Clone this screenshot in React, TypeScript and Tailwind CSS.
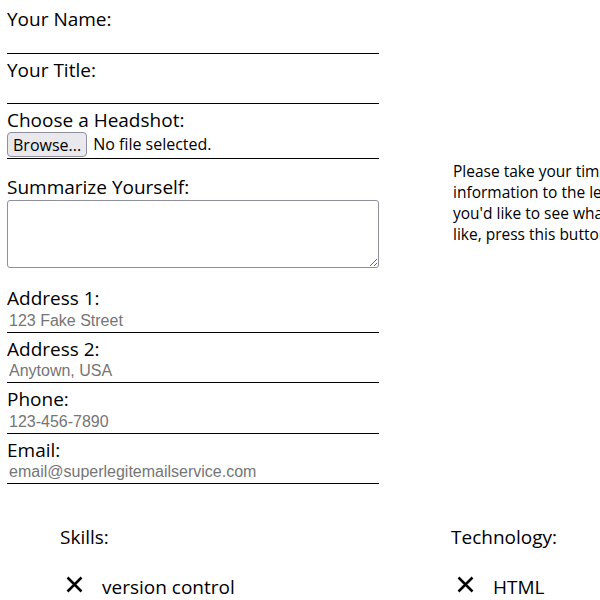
import React from "react";

const labelCls = "block pt-[4px] text-[19px] leading-[24px] text-black";
const inputCls =
  "block w-[372px] h-[22.5px] border-b border-black px-[2px] text-[16px] outline-none placeholder:text-[#757575] font-['Liberation_Sans',Arial,sans-serif]";

function Field({ label, placeholder, first }: { label: string; placeholder?: string; first?: boolean }) {
  return (
    <div className={first ? "pt-[3px]" : ""}>
      <label className={labelCls}>{label}</label>
      <input type="text" placeholder={placeholder} className={inputCls} />
    </div>
  );
}

function XIcon() {
  return (
    <svg width="17" height="17" viewBox="0 0 17 17" className="block shrink-0">
      <path d="M1.5 1.5 L15.5 15.5 M15.5 1.5 L1.5 15.5" stroke="#000" strokeWidth="2.5" fill="none" />
    </svg>
  );
}

function ListCol({ title, item }: { title: string; item: string }) {
  return (
    <div className="w-[391px] shrink-0 pl-[60px]">
      <div className="text-[19px] leading-[26px]">{title}</div>
      <ul className="mt-[24px]">
        <li className="flex items-start">
          <span className="ml-[6px] mt-[2px]">
            <XIcon />
          </span>
          <span className="ml-[19px] text-[19px] leading-[26px]">{item}</span>
        </li>
      </ul>
    </div>
  );
}

export default function App() {
  return (
    <div className="w-[600px] h-[600px] overflow-hidden bg-white font-['Open_Sans','Noto_Sans',sans-serif] text-black">
      <div className="flex w-[900px]">
        <div className="pl-[7px] w-[379px] shrink-0">
          <Field label="Your Name:" first />
          <Field label="Your Title:" />
          <div>
            <label className={labelCls}>Choose a Headshot:</label>
            <div className="flex items-start h-[26.5px] w-[372px] border-b border-black">
              <button className="h-[25px] px-[5px] bg-[#e9e9ed] border border-[#8f8f9d] rounded-[4px] text-[16px] leading-[20px] text-black">
                Browse...
              </button>
              <span className="ml-[6px] text-[16px] leading-[25px]">No file selected.</span>
            </div>
          </div>
          <div className="pt-[12px]">
            <label className={labelCls}>Summarize Yourself:</label>
            <textarea className="block mt-[1.5px] w-[372px] h-[68px] border border-[#8f8f9d] rounded-[3px] outline-none" />
          </div>
          <div className="pt-[14px]">
            <Field label="Address 1:" placeholder="123 Fake Street" />
          </div>
          <Field label="Address 2:" placeholder="Anytown, USA" />
          <Field label="Phone:" placeholder="123-456-7890" />
          <Field label="Email:" placeholder="email@superlegitemailservice.com" />
        </div>
        <div className="ml-[74px] mt-[161px] text-[15.5px] leading-[21px] whitespace-nowrap">
          <div>Please take your time filling out the</div>
          <div>information to the left. When</div>
          <div>you'd like to see what it looks</div>
          <div>like, press this button:</div>
        </div>
      </div>
      <div className="flex w-[900px] mt-[40px]">
        <ListCol title="Skills:" item="version control" />
        <ListCol title="Technology:" item="HTML" />
      </div>
    </div>
  );
}
